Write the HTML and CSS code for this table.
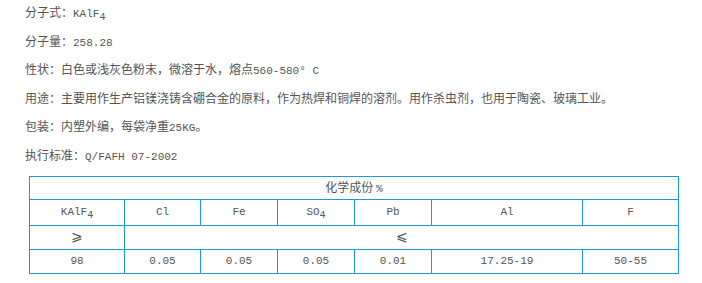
FILE: index.html
```html
<html>
    <head>
        <meta charset="utf-8">
        <link rel="stylesheet" href="styles.css">
    </head>
    <body>
        <div class="info">
            <p>分子式：<span class="en">KAlF<sub>4</sub></span></p>
            <p>分子量：<span class="en">258.28</span></p>
            <p>性状：白色或浅灰色粉末，微溶于水，熔点<span class="en">560-580° C</span></p>
            <p>用途：主要用作生产铝镁浇铸含硼合金的原料，作为热焊和铜焊的溶剂。用作杀虫剂，也用于陶瓷、玻璃工业。</p>
            <p>包装：内塑外编，每袋净重<span class="en">25KG</span>。</p>
            <p>执行标准：<span class="en">Q/FAFH 07-2002</span></p>
        </div>
        <table class="spec">
            <colgroup>
                <col class="c1">
                <col class="c2">
                <col class="c3">
                <col class="c4">
                <col class="c5">
                <col class="c6">
                <col class="c7">
            </colgroup>
            <tr class="head">
                <td colspan="7">化学成份 <span class="en">%</span></td>
            </tr>
            <tr class="names">
                <td>KAlF<sub>4</sub></td>
                <td>Cl</td>
                <td>Fe</td>
                <td>SO<sub>4</sub></td>
                <td>Pb</td>
                <td>Al</td>
                <td>F</td>
            </tr>
            <tr class="cmp">
                <td>⩾</td>
                <td colspan="6">⩽</td>
            </tr>
            <tr class="vals">
                <td>98</td>
                <td>0.05</td>
                <td>0.05</td>
                <td>0.05</td>
                <td>0.01</td>
                <td>17.25-19</td>
                <td>50-55</td>
            </tr>
        </table>
    </body>
</html>
```

FILE: styles.css
```css
body {
    margin: 0;
    padding: 3px 0 0 25px;
    font-family: "Noto Sans CJK SC", sans-serif;
    font-size: 12px;
    color: #555;
    background-color: #fff;
}
.en {
    font-family: "Liberation Mono", monospace;
    font-size: 11px;
    line-height: 1;
}
sub {
    font-size: 10px;
    vertical-align: -3px;
    line-height: 0;
}
.info p {
    margin: 0 0 10.6px;
    height: 18px;
    line-height: 18px;
    white-space: nowrap;
}
.info p:last-child {
    margin-bottom: 0;
}
table.spec {
    border-collapse: collapse;
    margin: 12px 0 0 4px;
    width: 650px;
    table-layout: fixed;
    font-family: "Liberation Mono", "Noto Sans CJK SC", monospace;
    font-size: 11px;
}
table.spec td {
    border: 1px solid #1a9ae0;
    text-align: center;
    padding: 0;
    height: 23px;
    line-height: 14px;
}
table.spec tr.names td {
    height: 26px;
}
table.spec tr.cmp td,
table.spec tr.vals td {
    height: 24px;
}
table.spec tr.head td {
    font-family: "Noto Sans CJK SC", sans-serif;
    font-size: 12px;
}
table.spec tr.cmp td {
    font-size: 14px;
}
.c1 { width: 95px; }
.c2 { width: 76px; }
.c3 { width: 77px; }
.c4 { width: 77px; }
.c5 { width: 77px; }
.c6 { width: 151px; }
.c7 { width: 96px; }
```
